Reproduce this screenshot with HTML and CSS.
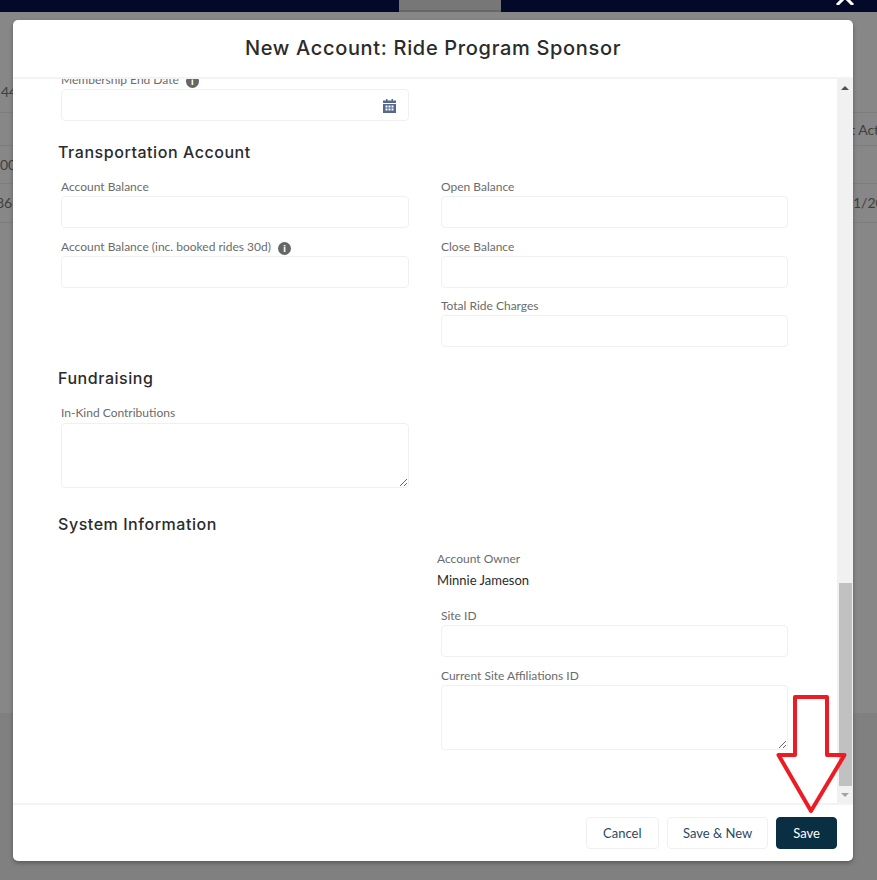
FILE: index.html
```html
<!DOCTYPE html>
<html lang="en">
<head>
    <meta charset="UTF-8">
    <meta name="viewport" content="width=device-width, initial-scale=1.0">
    <title>New Account: Ride Program Sponsor</title>
    <link rel="stylesheet" href="styles.css">
</head>
<body>
    <!-- page behind the dialog -->
    <div class="topbar">
        <div class="topbar-tab"></div>
    </div>
    <div class="list">
        <div class="row row-a"><span class="cell-left cell-first">44</span></div>
        <div class="row row-b"><span class="cell-left"></span><span class="cell-right">t Activity</span></div>
        <div class="row row-c"><span class="cell-left">00</span></div>
        <div class="row row-d"><span class="cell-left cell-clip">866</span><span class="cell-right cell-date">1/20</span></div>
    </div>
    <div class="page-foot"></div>

    <svg class="close-icon" width="20" height="8" viewBox="0 0 20 8">
        <path d="M2 8 L10 0 L18 8" fill="none" stroke="#fff" stroke-width="3"/>
    </svg>

    <div class="modal">
        <header class="modal-header">
            <h1>New Account: Ride Program Sponsor</h1>
        </header>
        <div class="modal-middle">
            <form class="modal-body">
                <div class="grid grid-first">
                    <div class="field">
                        <label class="field-label" for="end_date">Membership End Date <span class="info">i</span></label>
                        <div class="date-wrap">
                            <input type="text" id="end_date">
                            <svg class="calendar" width="13" height="14" viewBox="0 0 13 14">
                                <path fill="#54698d" d="M3 0h1.500v2H3zM8.500 0H10v2H8.500zM0 1.500h13V4H0zM0 5h13v9H0z"/>
                                <path fill="#fff" d="M2.500 6.500h2v2h-2zM5.500 6.500h2v2h-2zM8.500 6.500h2v2h-2zM2.500 9.500h2v2h-2zM5.500 9.500h2v2h-2zM8.500 9.500h2v2h-2z"/>
                            </svg>
                        </div>
                    </div>
                </div>

                <h2 class="heading-half">Transportation Account</h2>
                <div class="grid">
                    <div>
                        <div class="field">
                            <label class="field-label" for="balance">Account Balance</label>
                            <input type="text" id="balance">
                        </div>
                        <div class="field">
                            <label class="field-label" for="balance_30d">Account Balance (inc. booked rides 30d) <span class="info">i</span></label>
                            <input type="text" id="balance_30d">
                        </div>
                    </div>
                    <div>
                        <div class="field">
                            <label class="field-label" for="open_balance">Open Balance</label>
                            <input type="text" id="open_balance">
                        </div>
                        <div class="field">
                            <label class="field-label" for="close_balance">Close Balance</label>
                            <input type="text" id="close_balance">
                        </div>
                        <div class="field">
                            <label class="field-label" for="ride_charges">Total Ride Charges</label>
                            <input type="text" id="ride_charges">
                        </div>
                    </div>
                </div>

                <h2 class="heading-half">Fundraising</h2>
                <div class="grid grid-fundraising">
                    <div class="field">
                        <label class="field-label" for="in_kind">In-Kind Contributions</label>
                        <textarea id="in_kind"></textarea>
                    </div>
                </div>

                <h2 class="heading-system">System Information</h2>
                <div class="grid">
                    <div></div>
                    <div>
                        <div class="owner">
                            <div class="owner-label">Account Owner</div>
                            <div class="owner-name">Minnie Jameson</div>
                        </div>
                        <div class="field">
                            <label class="field-label" for="site_id">Site ID</label>
                            <input type="text" id="site_id">
                        </div>
                        <div class="field">
                            <label class="field-label" for="affiliations">Current Site Affiliations ID</label>
                            <textarea id="affiliations"></textarea>
                        </div>
                    </div>
                </div>
            </form>
            <div class="scrollbar">
                <div class="scroll-btn"><span class="arrow-up"></span></div>
                <div class="scroll-thumb"></div>
                <div class="scroll-btn"><span class="arrow-down"></span></div>
            </div>
        </div>
        <footer class="modal-footer">
            <button type="button" class="btn">Cancel</button>
            <button type="button" class="btn btn-new">Save &amp; New</button>
            <button type="button" class="btn btn-save">Save</button>
        </footer>
    </div>

    <!-- annotation drawn on top of the screenshot -->
    <svg class="red-arrow" width="877" height="880" viewBox="0 0 877 880">
        <path d="M795 697 H827 V755 H844.500 L811 811 L778.500 755 H795 Z" fill="none" stroke="#ed1c24" stroke-width="4" stroke-linejoin="round"/>
    </svg>
</body>
</html>
```

FILE: styles.css
```css
html, body {
    height: 100%;
}
body {
    display: flex;
    flex-direction: column;
    height: 880px;
    margin: 0;
    overflow: hidden;
    font-family: "Lato", "Liberation Sans", sans-serif;
    background-color: #808080;
}

/* background page */
.topbar {
    display: flex;
    flex: none;
    height: 12px;
    padding-left: 399px;
    background-color: #030a29;
}
.topbar-tab {
    box-sizing: border-box;
    width: 102px;
    height: 12px;
    background-color: #777777;
    border-bottom: 2px solid #686868;
}
.list {
    flex: none;
    height: 701px;
    box-sizing: border-box;
    padding-top: 62px;
    background-color: #878787;
}
.row {
    display: grid;
    grid-template-columns: 850px 1fr;
    box-sizing: border-box;
    border-bottom: 1px solid #7d7d7d;
    overflow: hidden;
    white-space: nowrap;
    font-size: 14px;
    color: #3f3f3f;
}
.row-a {
    height: 39px;
    padding-top: 9px;
}
.row-b {
    height: 33px;
    padding-top: 8px;
}
.row-c {
    height: 38px;
    padding-top: 10px;
}
.row-d {
    height: 39px;
    padding-top: 10px;
}
.cell-first {
    margin-left: 1px;
}
.cell-clip {
    margin-left: -4px;
}
.cell-date {
    margin-left: 3px;
}
.page-foot {
    flex: 1;
    background-color: #808080;
}
.close-icon {
    position: absolute;
    top: -3px;
    left: 835px;
}

/* dialog */
.modal {
    position: absolute;
    top: 20px;
    left: 13px;
    display: flex;
    flex-direction: column;
    width: 840px;
    height: 841px;
    background: white;
    border-radius: 5px;
    box-shadow: 0 2px 4px rgba(0, 0, 0, 0.3);
    overflow: hidden;
}
.modal-header {
    flex: none;
    height: 57px;
    border-bottom: 2px solid #f3f3f3;
    text-align: center;
}
.modal-header h1 {
    margin: 0;
    font-family: "Inter", "Open Sans", sans-serif;
    font-size: 20px;
    font-weight: 500;
    line-height: 57px;
    letter-spacing: 0.67px;
    color: #2b2b2b;
}
.modal-middle {
    display: flex;
    flex: none;
    height: 724px;
    overflow: hidden;
}
.modal-body {
    flex: 1;
    box-sizing: border-box;
    padding: 0 49px 0 48px;
    overflow: hidden;
}
.modal-body h2 {
    height: 32px;
    margin: 15px 0 0 -3px;
    font-family: "Inter", "Open Sans", sans-serif;
    font-size: 16px;
    font-weight: 500;
    line-height: 32px;
    letter-spacing: 0.55px;
    color: #2b2b2b;
}
.modal-body h2.heading-half {
    margin-top: 15.5px;
    line-height: 31px;
}
.modal-body h2.heading-system {
    margin-top: 20px;
}
.grid {
    display: grid;
    grid-template-columns: 348px 347px;
    column-gap: 32px;
}
.grid-first {
    margin-top: -17.5px;
}
.grid-fundraising .field-label {
    height: 19px;
}
.field {
    padding-top: 9.5px;
}
.field-label {
    display: block;
    height: 18px;
    font-size: 12px;
    line-height: 18px;
    color: #6b6b6b;
}
.field input,
.field textarea {
    display: block;
    box-sizing: border-box;
    width: 100%;
    height: 32px;
    margin: 0;
    border: 1px solid #f0f0f0;
    border-radius: 4px;
    background: white;
    outline: none;
}
.field textarea {
    height: 65px;
}
.info {
    display: inline-block;
    width: 13px;
    height: 13px;
    margin-left: 4px;
    border-radius: 50%;
    background-color: #666666;
    color: white;
    font-size: 10px;
    font-weight: 900;
    line-height: 13px;
    text-align: center;
    vertical-align: -1px;
}
.date-wrap {
    position: relative;
}
.calendar {
    position: absolute;
    top: 10px;
    right: 13px;
}
.owner {
    box-sizing: border-box;
    height: 57.5px;
    margin-left: -4px;
    padding-top: 9px;
}
.owner-label {
    height: 18px;
    font-size: 12px;
    line-height: 19px;
    color: #6b6b6b;
}
.owner-name {
    font-size: 13px;
    line-height: 26px;
    color: #2b2b2b;
}

/* scrollbar */
.scrollbar {
    display: flex;
    flex: none;
    flex-direction: column;
    width: 16px;
    background-color: #f1f1f1;
}
.scroll-btn {
    display: flex;
    flex: none;
    align-items: center;
    justify-content: center;
    height: 17px;
}
.arrow-up {
    border-right: 4px solid transparent;
    border-bottom: 4px solid #505050;
    border-left: 4px solid transparent;
}
.arrow-down {
    border-top: 4px solid #a3a3a3;
    border-right: 4px solid transparent;
    border-left: 4px solid transparent;
}
.scroll-thumb {
    width: 13px;
    height: 203px;
    margin: auto 1px 0 2px;
    background-color: #c1c1c1;
}

/* footer */
.modal-footer {
    display: flex;
    flex: none;
    justify-content: flex-end;
    gap: 8px;
    height: 58px;
    box-sizing: border-box;
    padding: 12px 16px 0;
    border-top: 2px solid #f3f3f3;
}
.btn {
    height: 32px;
    padding: 0 16.5px;
    border: 1px solid #f0f0f0;
    border-radius: 4px;
    background: white;
    font-family: "Lato", "Liberation Sans", sans-serif;
    font-size: 13px;
    color: #2a4a5e;
    cursor: pointer;
}
.btn-new {
    padding: 0 15px;
}
.btn-save {
    padding: 0 16px;
    border-color: #0b2f42;
    background-color: #0b2f42;
    color: white;
}

.red-arrow {
    position: absolute;
    top: 0;
    left: 0;
    pointer-events: none;
}
```
